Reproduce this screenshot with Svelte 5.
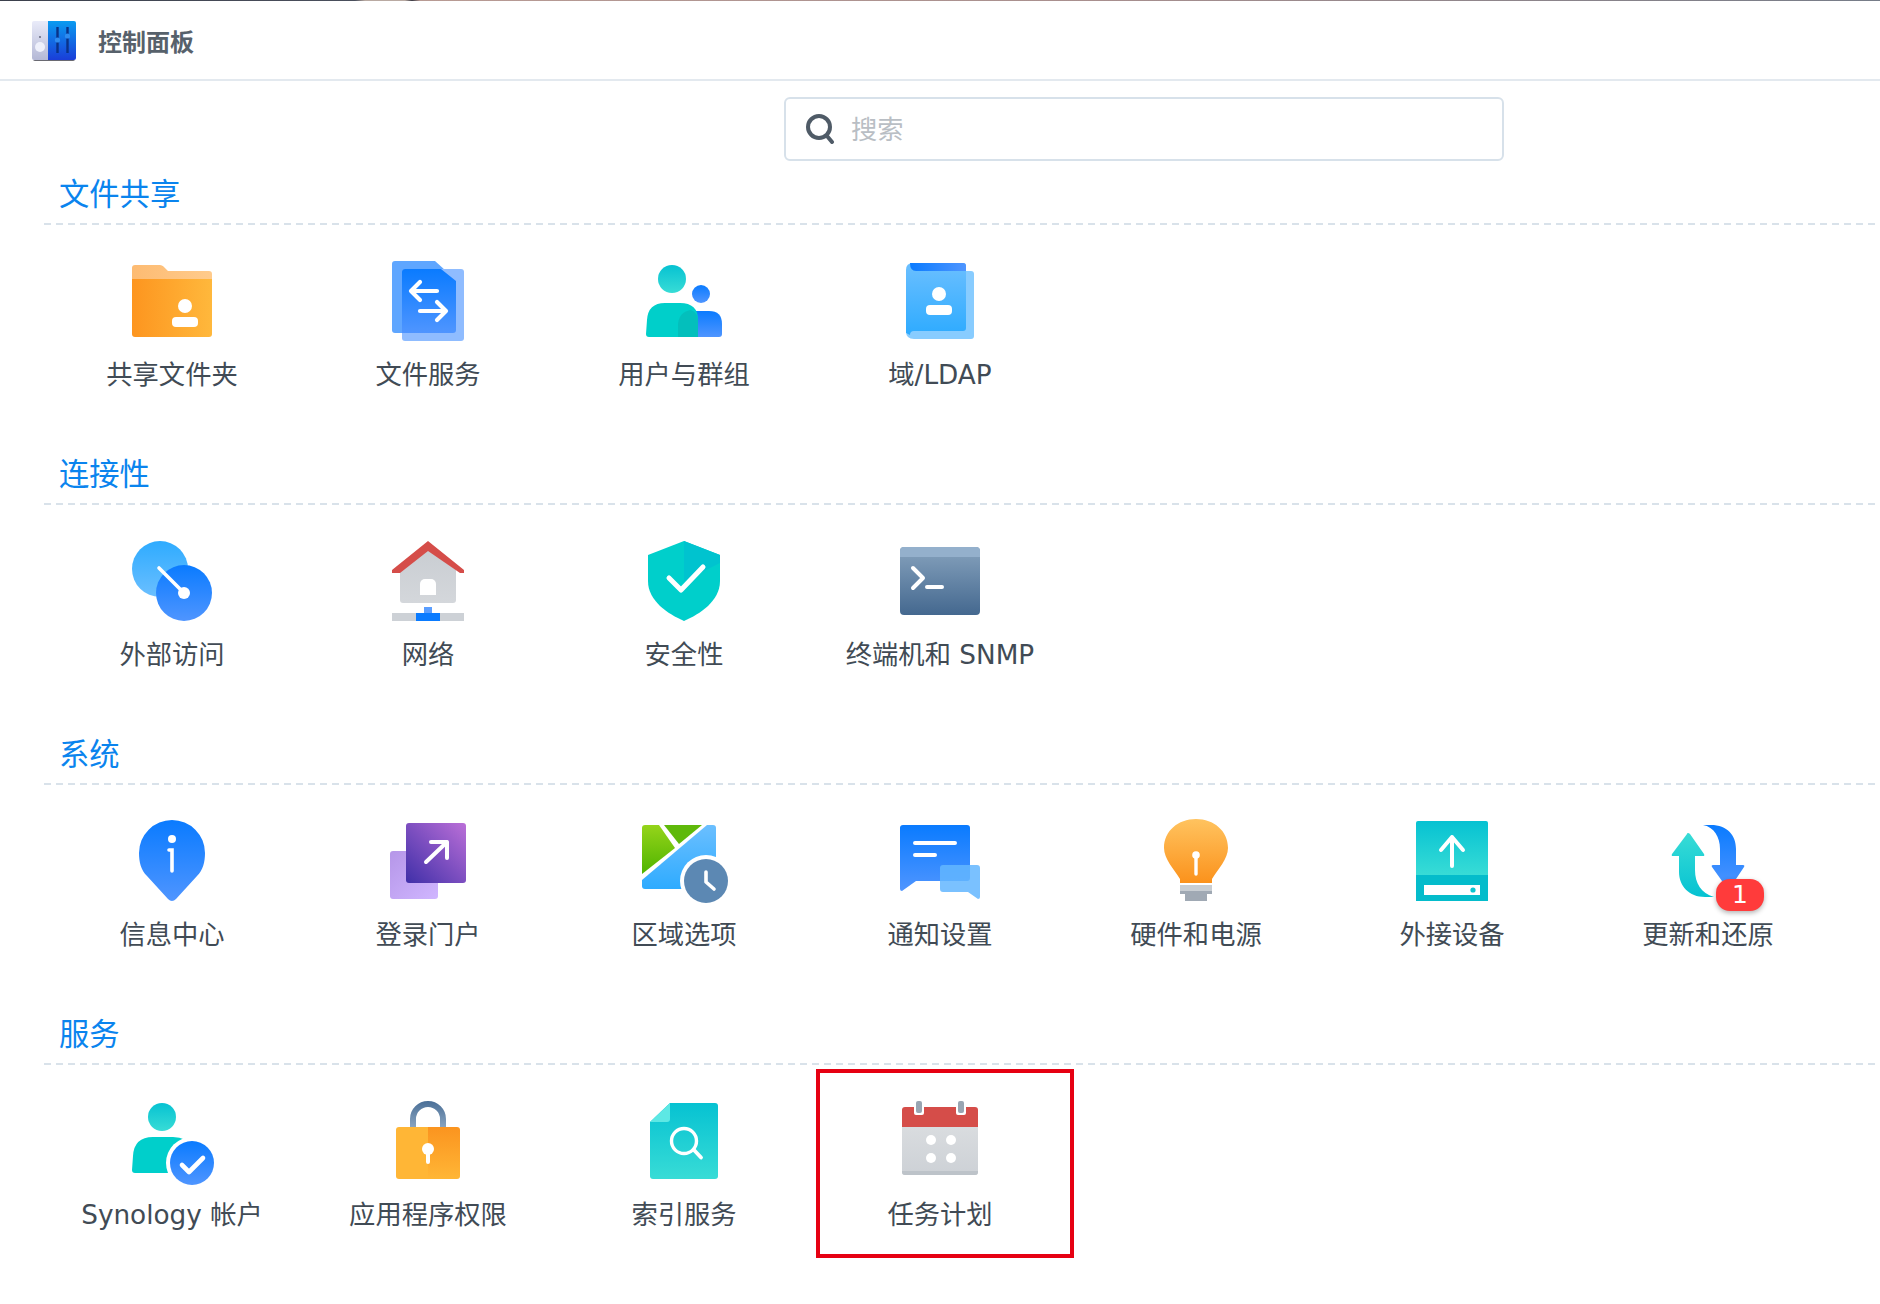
<script>
  const sections = [
    {
      title: '文件共享',
      items: [
        { id: 'folder', label: '共享文件夹' },
        { id: 'files', label: '文件服务' },
        { id: 'users', label: '用户与群组' },
        { id: 'ldap', label: '域/LDAP' }
      ]
    },
    {
      title: '连接性',
      items: [
        { id: 'external', label: '外部访问' },
        { id: 'network', label: '网络' },
        { id: 'security', label: '安全性' },
        { id: 'terminal', label: '终端机和 SNMP' }
      ]
    },
    {
      title: '系统',
      items: [
        { id: 'info', label: '信息中心' },
        { id: 'portal', label: '登录门户' },
        { id: 'region', label: '区域选项' },
        { id: 'notify', label: '通知设置' },
        { id: 'bulb', label: '硬件和电源' },
        { id: 'device', label: '外接设备' },
        { id: 'update', label: '更新和还原', badge: 1 }
      ]
    },
    {
      title: '服务',
      items: [
        { id: 'account', label: 'Synology 帐户' },
        { id: 'lock', label: '应用程序权限' },
        { id: 'index', label: '索引服务' },
        { id: 'calendar', label: '任务计划', marked: true }
      ]
    }
  ];
</script>

{#snippet icon(id)}
  <svg class="icon" viewBox="0 0 80 80" aria-hidden="true">
    {#if id === 'folder'}
      <path d="M0 8a3 3 0 0 1 3-3h25q2 0 3.500 1.500L36 11h41a3 3 0 0 1 3 3v6H0z" fill="url(#g-folder-top)" />
      <path d="M0 19h80v55a3 3 0 0 1-3 3H3a3 3 0 0 1-3-3z" fill="url(#g-orange-h)" />
      <circle cx="53" cy="46" r="7" fill="#fff" />
      <rect x="40" y="57" width="26" height="10" rx="4" fill="#fff" />
    {:else if id === 'files'}
      <path d="M4 4a3 3 0 0 1 3-3h40l21 19v50a3 3 0 0 1-3 3H7a3 3 0 0 1-3-3z" fill="#5fa6ff" />
      <path d="M17 9h56a3 3 0 0 1 3 3v66a3 3 0 0 1-3 3H17a3 3 0 0 1-3-3V12a3 3 0 0 1 3-3z" fill="#8fbcff" />
      <path d="M17 9h36l15 12v49a3 3 0 0 1-3 3H14V12a3 3 0 0 1 3-3z" fill="url(#g-blue)" />
      <g fill="none" stroke="#fff" stroke-width="4.200" stroke-linecap="round" stroke-linejoin="round">
        <path d="M49 31H23M32 22l-9 9 9 9" />
        <path d="M32 51h26M49 42l9 9-9 9" />
      </g>
    {:else if id === 'users'}
      <circle cx="57" cy="34" r="9" fill="url(#g-blue)" />
      <path d="M34 77V64q0-13 13-13h18q13 0 13 13v10a3 3 0 0 1-3 3z" fill="url(#g-blue)" />
      <circle cx="28" cy="19" r="14" fill="url(#g-teal)" />
      <path d="M2 74l1-14q1-17 18-17h15q18 0 18 17v17H5a3 3 0 0 1-3-3z" fill="#00cfca" />
      <path d="M34 77v-11q0-14 13-16q7 3 7 10v17z" fill="#03bfbc" />
    {:else if id === 'ldap'}
      <path d="M10 11h61a3 3 0 0 1 3 3v62a3 3 0 0 1-3 3H14q-8 0-8-8V20z" fill="#88ccff" />
      <path d="M6 10q0-7 7-7h50a3 3 0 0 1 3 3v62a3 3 0 0 1-3 3H14q-4 0-4 4l-4-2z" fill="url(#g-sky)" />
      <path d="M10 3h53a3 3 0 0 1 3 3v5H16q-6 0-6-8z" fill="url(#g-blue-h)" />
      <circle cx="39" cy="34" r="7" fill="#fff" />
      <rect x="26" y="45" width="26" height="10" rx="4" fill="#fff" />
    {:else if id === 'external'}
      <circle cx="28" cy="29" r="28" fill="url(#g-sky-up)" />
      <circle cx="52" cy="53" r="28" fill="url(#g-blue)" />
      <path d="M27 28l25 25" stroke="#fff" stroke-width="3.600" stroke-linecap="round" />
      <circle cx="52" cy="53" r="6" fill="#fff" />
    {:else if id === 'network'}
      <path d="M12 30L40 9l28 21v30a3 3 0 0 1-3 3H15a3 3 0 0 1-3-3z" fill="url(#g-grey)" />
      <path d="M4 30L40 1l36 29v3h-4L40 11 12 33H4z" fill="#d54d49" />
      <path d="M32 44a5 5 0 0 1 5-5h6a5 5 0 0 1 5 5v11H32z" fill="#fff" />
      <rect x="4" y="73" width="72" height="8" fill="#cdd1d6" />
      <rect x="28" y="73" width="24" height="8" fill="#0a7bff" />
      <rect x="36" y="67" width="8" height="6" fill="#5a9eff" />
    {:else if id === 'security'}
      <path d="M40 1L4 15v26c0 20 20 33 36 40 16-7 36-20 36-40V15z" fill="#00cfcb" />
      <path d="M40 1l36 14v8L40 41z" fill="#00c3cf" />
      <path d="M25 38l12 12 22-23" fill="none" stroke="#fff" stroke-width="5" stroke-linecap="round" stroke-linejoin="round" />
    {:else if id === 'terminal'}
      <rect y="7" width="80" height="68" rx="4" fill="url(#g-slate)" />
      <path d="M0 11a4 4 0 0 1 4-4h72a4 4 0 0 1 4 4v6H0z" fill="#94b0cc" />
      <path d="M13 28l10 10-10 10M27 47h15" fill="none" stroke="#fff" stroke-width="4" stroke-linecap="round" stroke-linejoin="round" />
    {:else if id === 'info'}
      <path d="M40 81q-2 0-4-2L15 56C9 50 7 42 7 33a33 33 0 0 1 66 0c0 9-2 17-8 23L44 79q-2 2-4 2z" fill="url(#g-blue)" />
      <circle cx="40" cy="19" r="4" fill="#fff" />
      <path d="M37 30h3v21" fill="none" stroke="#fff" stroke-width="3.600" stroke-linecap="round" />
    {:else if id === 'portal'}
      <rect x="2" y="31" width="48" height="48" rx="3" fill="url(#g-lilac)" />
      <rect x="18" y="3" width="60" height="60" rx="3" fill="url(#g-violet)" />
      <path d="M38 42l21-20M43 22h16v16" fill="none" stroke="#fff" stroke-width="4" stroke-linecap="round" stroke-linejoin="round" />
    {:else if id === 'region'}
      <path d="M-2 8a3 3 0 0 1 3-3h14l16 23L-2 54z" fill="url(#g-green)" />
      <path d="M20 5h38L35 24z" fill="#5fb90a" />
      <path d="M-2 60L63 5h6a3 3 0 0 1 3 3v58a3 3 0 0 1-3 3H1a3 3 0 0 1-3-3z" fill="url(#g-sky)" />
      <circle cx="62" cy="61" r="26" fill="#fff" />
      <circle cx="62" cy="61" r="22" fill="#5c88b3" />
      <path d="M62 52v10l8 7" fill="none" stroke="#fff" stroke-width="3.600" stroke-linecap="round" stroke-linejoin="round" />
    {:else if id === 'notify'}
      <path d="M3 5h64a3 3 0 0 1 3 3v50a3 3 0 0 1-3 3H16L2 71q-2 0-2-2V8a3 3 0 0 1 3-3z" fill="url(#g-blue)" />
      <path d="M15 23h40M15 35h20" stroke="#fff" stroke-width="4" stroke-linecap="round" />
      <path d="M43 45h34a3 3 0 0 1 3 3v29q0 2-2 2l-10-7H43a3 3 0 0 1-3-3V48a3 3 0 0 1 3-3z" fill="#63b6ff" fill-opacity="0.85" />
    {:else if id === 'bulb'}
      <path d="M24 63v-4c-6-10-16-20-16-31C8 11 22-1 40-1s32 12 32 29c0 11-10 21-16 31v4z" fill="url(#g-bulb)" />
      <rect x="24" y="65" width="32" height="7" fill="#c9ced3" />
      <path d="M24 71h32v3h-5v7H29v-7h-5z" fill="#a0a9b4" />
      <circle cx="40" cy="35" r="3.800" fill="#fff" />
      <path d="M40 36v18" stroke="#fff" stroke-width="3.400" stroke-linecap="round" />
    {:else if id === 'device'}
      <path d="M6 1h68a2 2 0 0 1 2 2v52H4V3a2 2 0 0 1 2-2z" fill="url(#g-teal)" />
      <rect x="4" y="55" width="72" height="26" fill="#04bccb" />
      <rect x="12" y="65" width="56" height="10" fill="#fff" />
      <circle cx="61" cy="70" r="2.600" fill="#0bc5cf" />
      <path d="M40 46V17M29 30l11-13 11 13" fill="none" stroke="#fff" stroke-width="4" stroke-linecap="round" stroke-linejoin="round" />
    {:else if id === 'update'}
      <path d="M35 5h8c16 0 25 10 25 24v16h7q2 0 1 2L62 68q-2 1-3 0L44 47q-1-2 1-2h7V29c0-12-6-22-17-24z" fill="url(#g-blue)" />
      <path d="M20 13q1 0 2 1l14 20q1 2-1 2h-8v14c0 13 6 23 19 27h-9c-16 0-26-11-26-25V36H5q-2 0-1-2l15-20q0-1 1-1z" fill="url(#g-teal-up)" />
    {:else if id === 'account'}
      <circle cx="30" cy="17" r="14" fill="url(#g-teal)" />
      <path d="M0 70l1-14q1-19 20-19h20q14 0 18 10v26H3q-3 0-3-3z" fill="#00cfcb" />
      <circle cx="60" cy="63" r="26" fill="#fff" />
      <circle cx="60" cy="63" r="22" fill="url(#g-blue)" />
      <path d="M50 65l7 7 14-14" fill="none" stroke="#fff" stroke-width="4.600" stroke-linecap="round" stroke-linejoin="round" />
    {:else if id === 'lock'}
      <path d="M25 30V19a15 15 0 0 1 30 0v11" fill="none" stroke="url(#g-shackle)" stroke-width="6" />
      <path d="M11 27h29v52H11a3 3 0 0 1-3-3V30a3 3 0 0 1 3-3z" fill="#ffb636" />
      <path d="M40 27h29a3 3 0 0 1 3 3v46a3 3 0 0 1-3 3H40z" fill="url(#g-orange-v)" />
      <circle cx="40" cy="49" r="6" fill="#fff" />
      <path d="M40 50v12" stroke="#fff" stroke-width="4" stroke-linecap="round" />
    {:else if id === 'index'}
      <path d="M26 3h45a3 3 0 0 1 3 3v70a3 3 0 0 1-3 3H9a3 3 0 0 1-3-3V22z" fill="url(#g-teal)" />
      <path d="M26 3v16a3 3 0 0 1-3 3H6z" fill="#5de8e4" />
      <circle cx="40" cy="41" r="12.500" fill="none" stroke="#fff" stroke-width="3.400" />
      <path d="M50 50l7 7.500" stroke="#fff" stroke-width="3.800" stroke-linecap="round" />
    {:else if id === 'calendar'}
      <path d="M2 27h76v45a3 3 0 0 1-3 3H5a3 3 0 0 1-3-3z" fill="url(#g-cal)" />
      <path d="M2 71h76v1a3 3 0 0 1-3 3H5a3 3 0 0 1-3-3z" fill="#bdc3c9" />
      <path d="M5 7h9v6a2 2 0 0 0 2 2h6a2 2 0 0 0 2-2V7h32v6a2 2 0 0 0 2 2h6a2 2 0 0 0 2-2V7h9a3 3 0 0 1 3 3v17H2V10a3 3 0 0 1 3-3z" fill="#d54d49" />
      <rect x="16" y="1" width="6" height="12" rx="2" fill="#99a5b2" />
      <rect x="58" y="1" width="6" height="12" rx="2" fill="#99a5b2" />
      <g fill="#fff">
        <circle cx="31" cy="40" r="5" />
        <circle cx="51" cy="40" r="5" />
        <circle cx="31" cy="58" r="5" />
        <circle cx="51" cy="58" r="5" />
      </g>
    {/if}
  </svg>
{/snippet}

<svg class="defs" aria-hidden="true">
  <defs>
    <linearGradient id="g-folder-top" x1="0" x2="1" y1="0" y2="0"><stop offset="0" stop-color="#fdbb72" /><stop offset="1" stop-color="#ffcb8c" /></linearGradient>
    <linearGradient id="g-orange-h" x1="0" x2="1" y1="0" y2="0"><stop offset="0" stop-color="#fd951f" /><stop offset="1" stop-color="#ffb83c" /></linearGradient>
    <linearGradient id="g-orange-v" x1="0" x2="0" y1="0" y2="1"><stop offset="0" stop-color="#fb941f" /><stop offset="1" stop-color="#ffb636" /></linearGradient>
    <linearGradient id="g-blue" x1="0" x2="0" y1="0" y2="1"><stop offset="0" stop-color="#0a7bff" /><stop offset="1" stop-color="#4f95ff" /></linearGradient>
    <linearGradient id="g-blue-h" x1="0" x2="1" y1="0" y2="0"><stop offset="0" stop-color="#0a7bff" /><stop offset="1" stop-color="#4f95ff" /></linearGradient>
    <linearGradient id="g-teal" x1="0" x2="0" y1="0" y2="1"><stop offset="0" stop-color="#06c2d2" /><stop offset="1" stop-color="#38dcd6" /></linearGradient>
    <linearGradient id="g-teal-up" x1="0" x2="0" y1="1" y2="0"><stop offset="0" stop-color="#06c2d2" /><stop offset="1" stop-color="#38dcd6" /></linearGradient>
    <linearGradient id="g-sky" x1="0" x2="0" y1="0" y2="1"><stop offset="0" stop-color="#6bbfff" /><stop offset="1" stop-color="#2eabff" /></linearGradient>
    <linearGradient id="g-sky-up" x1="0" x2="0" y1="0" y2="1"><stop offset="0" stop-color="#2eabff" /><stop offset="1" stop-color="#6bbfff" /></linearGradient>
    <linearGradient id="g-grey" x1="0" x2="0" y1="0" y2="1"><stop offset="0" stop-color="#c9cdd2" /><stop offset="1" stop-color="#d4d7db" /></linearGradient>
    <linearGradient id="g-slate" x1="0" x2="0" y1="0" y2="1"><stop offset="0" stop-color="#86a2bd" /><stop offset="1" stop-color="#44688f" /></linearGradient>
    <linearGradient id="g-lilac" x1="0" x2="1" y1="0" y2="1"><stop offset="0" stop-color="#b596e8" /><stop offset="1" stop-color="#d0b6ff" /></linearGradient>
    <linearGradient id="g-violet" x1="0" x2="1" y1="1" y2="0"><stop offset="0" stop-color="#3f2fa8" /><stop offset="1" stop-color="#bb6fd8" /></linearGradient>
    <linearGradient id="g-green" x1="0" x2="0" y1="0" y2="1"><stop offset="0" stop-color="#95d41a" /><stop offset="1" stop-color="#4fb400" /></linearGradient>
    <linearGradient id="g-bulb" x1="0" x2="0" y1="0" y2="1"><stop offset="0" stop-color="#ffc35f" /><stop offset="1" stop-color="#fb921c" /></linearGradient>
    <linearGradient id="g-shackle" gradientUnits="userSpaceOnUse" x1="0" x2="0" y1="1" y2="30"><stop offset="0" stop-color="#4a6f97" /><stop offset="1" stop-color="#8fa9c4" /></linearGradient>
    <linearGradient id="g-cal" x1="0" x2="0" y1="0" y2="1"><stop offset="0" stop-color="#d9dcdf" /><stop offset="1" stop-color="#cdd1d6" /></linearGradient>
    <linearGradient id="g-app-left" x1="0" x2="0" y1="0" y2="1"><stop offset="0" stop-color="#e9ebf9" /><stop offset="1" stop-color="#b4b8d6" /></linearGradient>
    <linearGradient id="g-app-right" x1="0" x2="0" y1="0" y2="1"><stop offset="0" stop-color="#0a9bf0" /><stop offset="1" stop-color="#1a3dd8" /></linearGradient>
  </defs>
</svg>

<div class="strip"></div>

<header>
  <svg class="app-icon" viewBox="0 0 44 40" aria-hidden="true">
    <path d="M2 0h14v39H2a2 2 0 0 1-2-2V2a2 2 0 0 1 2-2z" fill="url(#g-app-left)" />
    <path d="M16 0h26a2 2 0 0 1 2 2v35a2 2 0 0 1-2 2H16z" fill="url(#g-app-right)" />
    <path d="M1 39h42q-1 1-2 1H3q-1 0-2-1z" fill="#6a6a72" />
    <circle cx="8" cy="16" r="0.900" fill="#555a70" />
    <circle cx="8" cy="26" r="5" fill="#eef0fb" />
    <path d="M25.500 6v26M35.500 6v26" stroke="#0a3288" stroke-width="2.400" />
    <circle cx="25.500" cy="19" r="2.600" fill="#2f8cf0" />
    <circle cx="35.500" cy="15" r="2.600" fill="#2f8cf0" />
  </svg>
  <h1>控制面板</h1>
</header>

<main>
  <div class="search">
    <svg viewBox="0 0 30 30" aria-hidden="true">
      <circle cx="14" cy="13" r="11" fill="none" stroke="#4f5b67" stroke-width="4" />
      <path d="M22 22l5 6" stroke="#4f5b67" stroke-width="4" stroke-linecap="round" />
    </svg>
    <input type="text" placeholder="搜索" />
  </div>

  {#each sections as section}
    <section>
      <h2>{section.title}</h2>
      <div class="grid">
        {#each section.items as item}
          <div class="item" class:marked={item.marked}>
            <div class="icon-wrap">
              {@render icon(item.id)}
              {#if item.badge}
                <span class="badge">{item.badge}</span>
              {/if}
            </div>
            <span class="label">{item.label}</span>
          </div>
        {/each}
      </div>
    </section>
  {/each}
</main>

<style>
  :global(body) {
    background: #fff;
    font-family: "DejaVu Sans", "Noto Sans CJK SC", sans-serif;
  }

  .defs {
    position: absolute;
    width: 0;
    height: 0;
  }

  .strip {
    height: 1px;
    background: linear-gradient(
      90deg,
      #3b404c 0,
      #4a4f5c 355px,
      #b9aaa2 365px,
      #b9aaa2 405px,
      #3a3a44 412px,
      #b89b94 420px,
      #a88f8e 1100px,
      #767c88 1880px
    );
  }

  header {
    display: flex;
    align-items: center;
    gap: 22px;
    height: 78px;
    padding-left: 32px;
    border-bottom: 2px solid #e3e9ef;
  }

  .app-icon {
    width: 44px;
    height: 40px;
    margin-top: 2px;
  }

  h1 {
    margin: 0;
    font-size: 24px;
    font-weight: 700;
    color: #57616b;
  }

  .search {
    display: flex;
    align-items: center;
    gap: 16px;
    box-sizing: border-box;
    width: 720px;
    height: 64px;
    margin: 16px 0 3px 784px;
    padding-left: 19px;
    border: 2px solid #d7e1ea;
    border-radius: 6px;
  }

  .search svg {
    flex: none;
    width: 30px;
    height: 30px;
  }

  .search input {
    flex: 1;
    min-width: 0;
    margin-top: 2px;
    border: none;
    outline: none;
    padding: 0;
    background: none;
    font: inherit;
    font-size: 26.300px;
    color: #414b55;
  }

  .search input::placeholder {
    color: #b9bec4;
    opacity: 1;
  }

  section {
    height: 280px;
    margin-left: 44px;
  }

  h2 {
    box-sizing: border-box;
    height: 61px;
    margin: 0;
    padding-left: 15px;
    font-size: 30.300px;
    font-weight: 400;
    line-height: 62px;
    color: #0a84ee;
    background: repeating-linear-gradient(90deg, #d9e2ea 0 7px, transparent 7px 12px) left bottom / 100% 2px no-repeat;
  }

  .grid {
    display: grid;
    grid-template-columns: repeat(7, 256px);
    padding-top: 35px;
  }

  .item {
    position: relative;
    display: flex;
    flex-direction: column;
    align-items: center;
    gap: 15px;
  }

  .marked::after {
    content: "";
    position: absolute;
    top: -31px;
    left: 4px;
    box-sizing: border-box;
    width: 258px;
    height: 189px;
    border: 4px solid #e60012;
  }

  .icon-wrap {
    position: relative;
    width: 80px;
    height: 80px;
  }

  .icon {
    display: block;
    width: 80px;
    height: 80px;
    overflow: visible;
  }

  .label {
    font-size: 26.300px;
    line-height: 40px;
    color: #414b55;
    white-space: nowrap;
  }

  .badge {
    position: absolute;
    top: 59px;
    left: 48px;
    width: 48px;
    height: 32px;
    border-radius: 14px;
    background: #ff3b3b;
    box-shadow: 0 2px 5px rgba(0, 0, 0, 0.3);
    color: #fff;
    font-size: 25px;
    line-height: 32px;
    text-align: center;
  }
</style>
